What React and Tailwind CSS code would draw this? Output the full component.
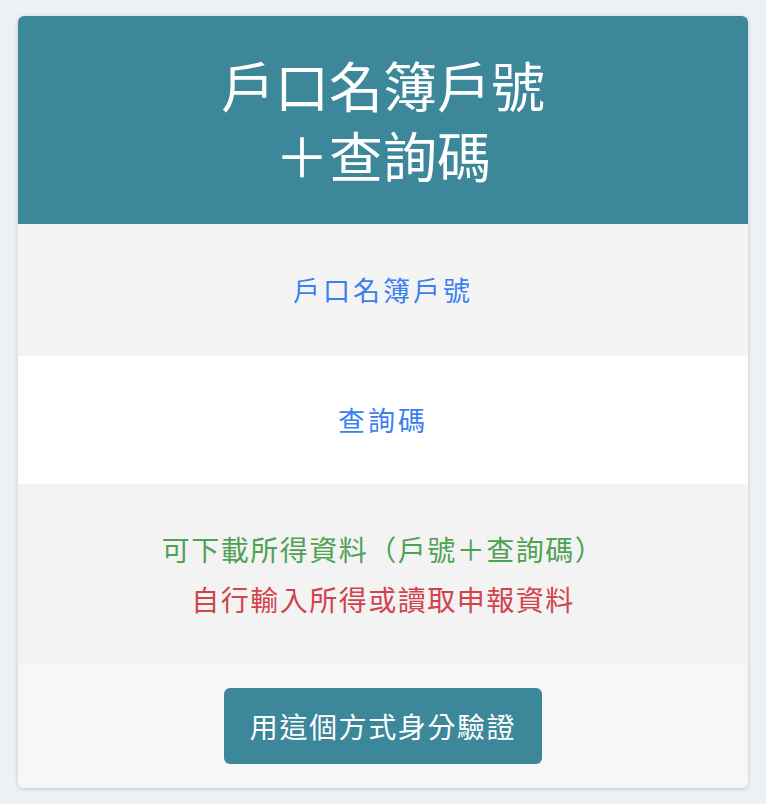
import React from "react";

const font = { fontFamily: '"Noto Sans CJK TC", "Noto Sans", sans-serif' };

const App = () => {
    return (
        <div className="min-h-screen bg-[#edf0f5] px-[18px] pt-[16px] pb-[16px]" style={font}>
            <div className="w-[730px] overflow-hidden rounded-[6px] bg-white shadow-[0_1px_4px_rgba(0,0,0,0.18)]">
                {/* header */}
                <div className="flex h-[208px] flex-col items-center justify-center bg-[#3c8799] text-center text-[54px] leading-[70px] text-white">
                    <div>戶口名簿戶號</div>
                    <div>＋查詢碼</div>
                </div>

                <div className="flex h-[132px] items-center justify-center bg-[#f4f4f4] text-[27px] tracking-[3px] text-[#3b7ff2]">
                    戶口名簿戶號
                </div>

                <div className="flex h-[128px] items-center justify-center bg-white text-[27px] tracking-[3px] text-[#3b7ff2]">
                    查詢碼
                </div>

                <div className="flex h-[180px] flex-col items-center justify-center gap-[12px] bg-[#f3f3f3] text-[28px] leading-[38px] tracking-[1.5px]">
                    <div className="text-[#4fa253]">可下載所得資料（戶號＋查詢碼）</div>
                    <div className="text-[#d2434c]">自行輸入所得或讀取申報資料</div>
                </div>

                <div className="flex h-[124px] items-center justify-center bg-[#f7f7f7]">
                    <button className="h-[76px] w-[318px] rounded-[6px] bg-[#3c8799] text-[28px] tracking-[1.6px] text-white">
                        用這個方式身分驗證
                    </button>
                </div>
            </div>
        </div>
    );
};

export default App;
